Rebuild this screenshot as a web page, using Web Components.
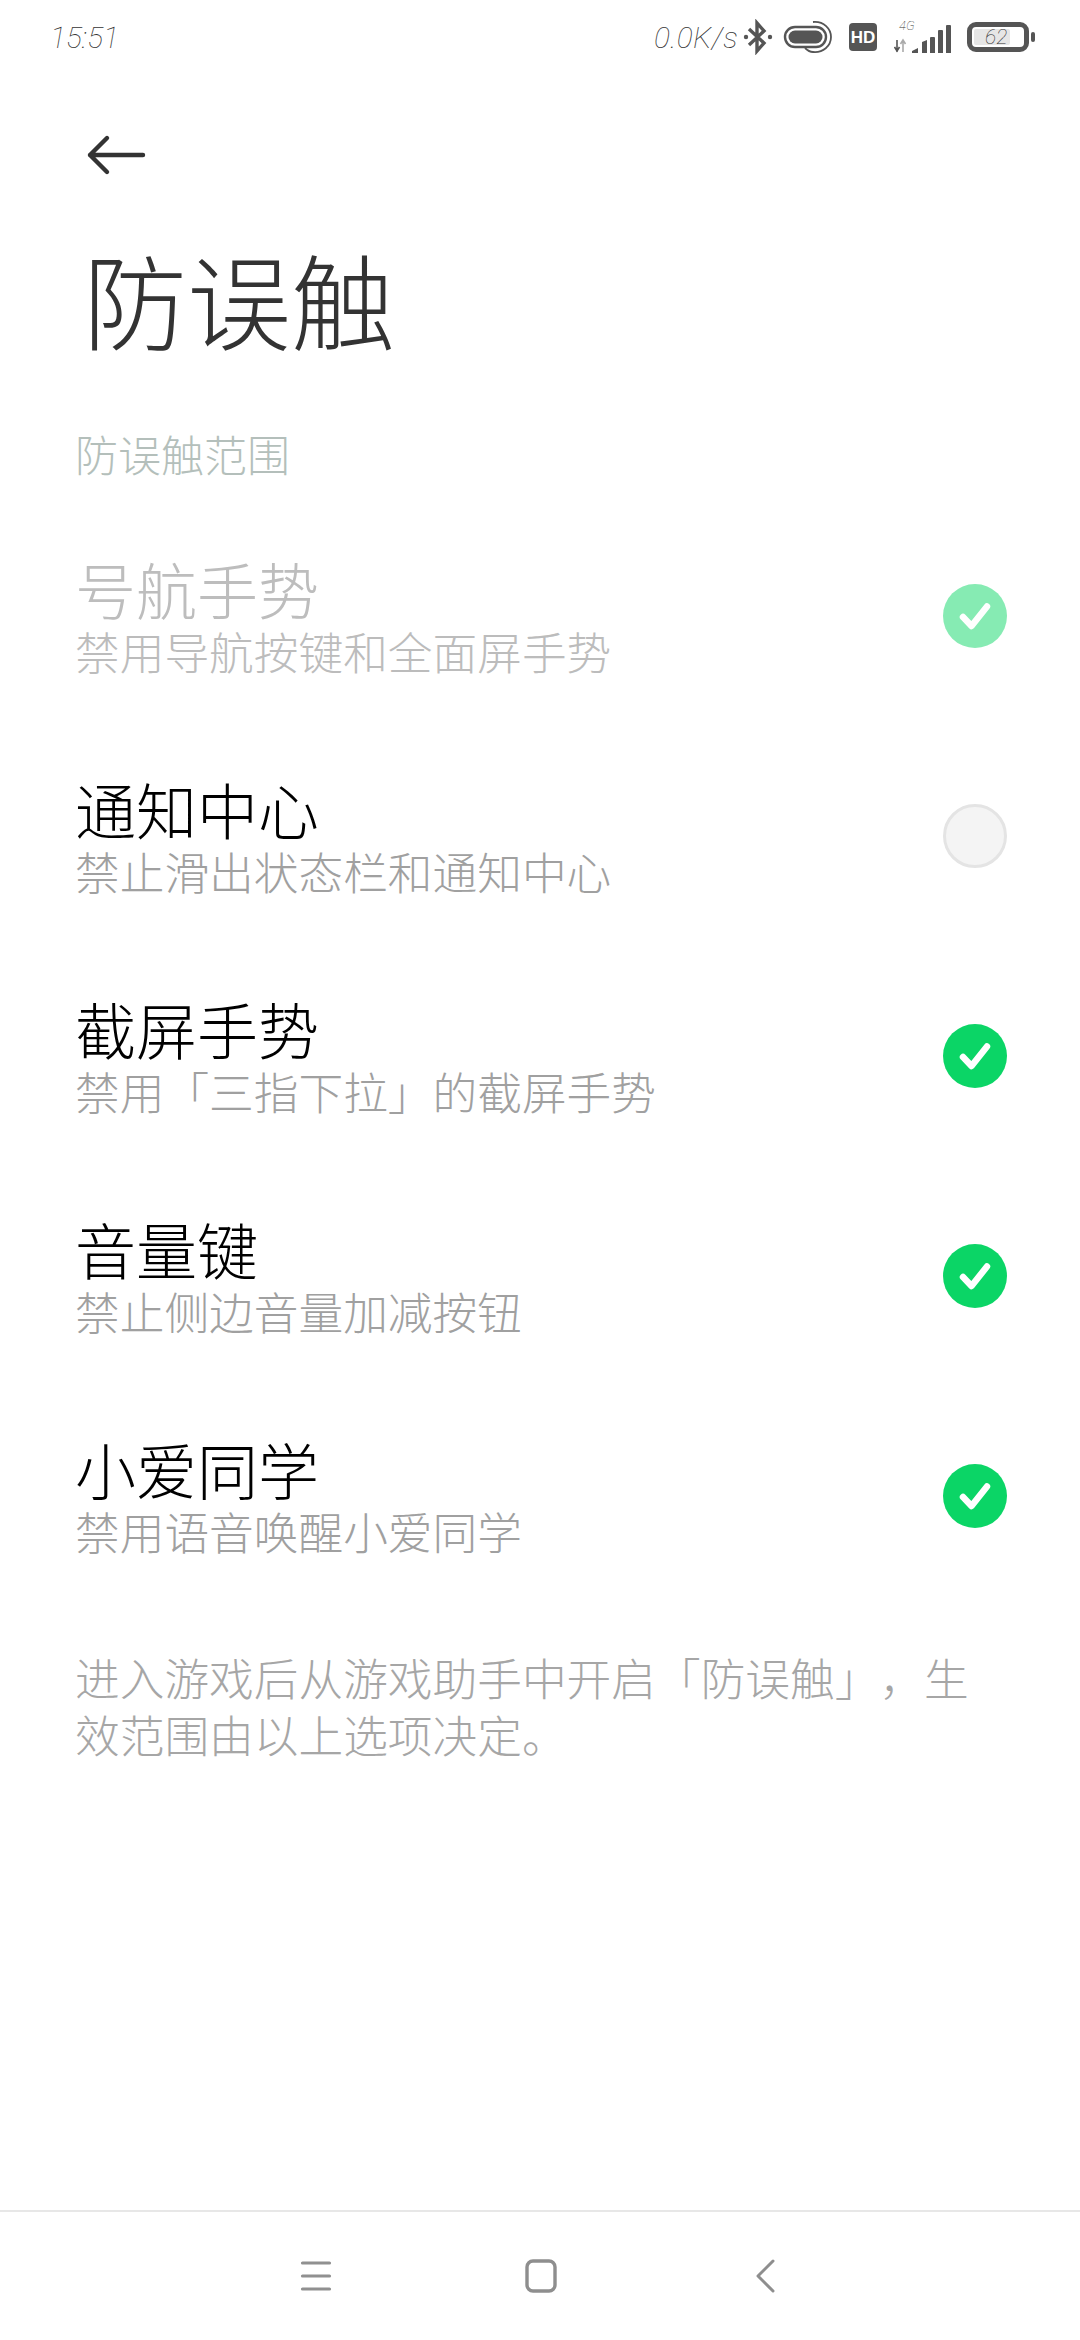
<!DOCTYPE html>
<html lang="zh-CN"><head><meta charset="utf-8"><title>防误触</title>
<style>
html,body{margin:0;padding:0;background:#fff}
body{width:1080px;height:2340px;font-family:"Liberation Sans","Noto Sans CJK SC",sans-serif;text-spacing-trim:space-all;display:flex;flex-direction:column;overflow:hidden}
</style></head><body>
<status-bar time="15:51" speed="0.0K/s" level="62"></status-bar>
<page-header>防误触</page-header>
<section-label>防误触范围</section-label>
<check-row checked disabled label="号航手势" sub="禁用导航按键和全面屏手势"></check-row>
<check-row label="通知中心" sub="禁止滑出状态栏和通知中心"></check-row>
<check-row checked label="截屏手势" sub="禁用「三指下拉」的截屏手势"></check-row>
<check-row checked label="音量键" sub="禁止侧边音量加减按钮"></check-row>
<check-row checked label="小爱同学" sub="禁用语音唤醒小爱同学"></check-row>
<foot-note>进入游戏后从游戏助手中开启「防误触」，生效范围由以上选项决定。</foot-note>
<nav-bar></nav-bar>
<script>
function el(name, html){
  customElements.define(name, class extends HTMLElement{
    connectedCallback(){
      if(this.shadowRoot) return;
      const a=n=>this.getAttribute(n)||'';
      this.attachShadow({mode:'open'}).innerHTML=html(a,this);
    }
  });
}
el('status-bar',a=>`<style>
:host{display:flex;align-items:center;height:76px;flex:none;padding:0 45px 2px 50px;box-sizing:border-box;color:#555;font-family:Roboto,"Liberation Sans",sans-serif}
.t{font-size:30px;font-weight:100;font-style:italic;color:#333}
.s{font-size:30px;font-weight:100;font-style:italic;color:#333;margin-left:auto;letter-spacing:.3px}
svg{display:block;flex:none}
.batt{position:relative;width:62px;height:30px;margin-left:15px;box-sizing:border-box;border:5px solid #555;border-radius:9px;flex:none}
.fill{position:absolute;left:2px;top:2px;bottom:2px;width:36px;background:#e6e6e6;border-radius:2px}
.n{position:absolute;left:13px;top:-3px;line-height:26px;font-size:21px;font-weight:100;font-style:italic;color:#333}
.nub{width:4px;height:10px;background:#555;border-radius:2px;margin-left:2px;flex:none}
</style>
<span class="t">${a('time')}</span><span class="s">${a('speed')}</span>
<svg width="30" height="36" viewBox="0 0 30 36" style="margin-left:5px"><path d="M6 10 L21 24 L14 32 V4 L21 12 L6 26" fill="none" stroke="#555" stroke-width="3.4"/><circle cx="3" cy="18" r="2.2" fill="#555"/><circle cx="27" cy="18" r="2.2" fill="#555"/></svg>
<svg width="50" height="34" viewBox="0 0 50 34" style="margin-left:9px"><rect x="3" y="7" width="41" height="20" rx="10" fill="none" stroke="#555" stroke-width="2.4"/><rect x="6.5" y="10.5" width="34" height="13" rx="6.5" fill="#555"/><path d="M31 2 C42 1 49 9 49 17 C49 26 41 33 31 32 C28 32 25 30 23 28" fill="none" stroke="#555" stroke-width="1.8"/></svg>
<svg width="28" height="28" viewBox="0 0 28 28" style="margin-left:17px"><rect width="28" height="28" rx="4" fill="#555"/><text x="14" y="20" text-anchor="middle" font-family="Liberation Sans" font-weight="700" font-size="17" fill="#fff">HD</text></svg>
<svg width="58" height="46" viewBox="0 -6 58 46" style="margin-left:17px"><text x="5" y="9.5" font-family="Roboto" font-weight="100" font-style="italic" font-size="13" fill="#333">4G</text><path d="M3 20v12M.5 27l2.5 4 2.5-4" fill="none" stroke="#555" stroke-width="1.6"/><path d="M9 32V20M6.500 24l2.500-4 2.500 4" fill="none" stroke="#aaa" stroke-width="1.600"/><path d="M18 33v-2l6-3v5zM28 33V22l5-2v13zM36 33V18q0-1 1-1h3q1 0 1 1v15zM44 33V11q0-1 1-1h3q1 0 1 1v22zM52 33V6q0-1 1-1h3q1 0 1 1v27z" fill="#555"/></svg>
<div class="batt"><div class="fill"></div><span class="n">62</span></div><div class="nub"></div>`);
el('page-header',()=>`<style>
:host{display:block;flex:none;color:#333}
.back{height:158px;padding:0 0 0 86px;display:flex;align-items:center}
svg{display:block}
.h{height:140px;line-height:146px;font-size:104px;padding-left:83px;font-weight:300}
</style>
<div class="back"><svg width="62" height="44" viewBox="0 0 62 44"><path d="M21 5 L4 22 L21 39 M4 22 H57" fill="none" stroke="#333" stroke-width="4.4" stroke-linecap="round" stroke-linejoin="round"/></svg></div>
<div class="h"><slot></slot></div>`);
el('section-label',()=>`<style>
:host{display:block;flex:none;margin-top:50px;margin-bottom:22px;height:60px;line-height:66px;padding-left:75px;font-size:43px;font-weight:300;color:#b4bfbb}
</style><slot></slot>`);
el('check-mark',(a,h)=>{
  const on=h.hasAttribute('checked'),dis=h.hasAttribute('disabled');
  return `<style>:host{display:block;flex:none;width:64px;height:64px}svg{display:block}</style>
<svg width="64" height="64" viewBox="0 0 64 64">${on?`<circle cx="32" cy="32" r="32" fill="${dis?'#86ebb3':'#0bd566'}"/><path d="M20 33 L28.500 42 L44 22.500" fill="none" stroke="#fff" stroke-width="6.500" stroke-linecap="round" stroke-linejoin="round"/>`:`<circle cx="32" cy="32" r="30.500" fill="#f4f4f4" stroke="#e4e4e4" stroke-width="3"/>`}</svg>`;
});
el('check-row',(a,h)=>{
  const on=h.hasAttribute('checked'),dis=h.hasAttribute('disabled');
  return `<style>
:host{display:flex;align-items:center;flex:none;height:220px;padding:0 73px 0 75px;box-sizing:border-box}
.b{flex:1;min-width:0;margin-top:12px}
.l{font-size:61px;line-height:70px;height:66px;font-weight:300;color:${dis?'#bdbdbd':'#000'}}
.d{font-size:44.700px;line-height:60px;font-weight:300;color:${dis?'#bcbcbc':'#a0a0a0'};white-space:nowrap}
</style>
<div class="b"><div class="l">${a('label')}</div><div class="d">${a('sub')}</div></div>
<check-mark ${on?'checked':''} ${dis?'disabled':''}></check-mark>`;
});
el('foot-note',()=>`<style>
:host{display:block;flex:none;margin-top:46px;padding:0 100px 0 75px;font-size:44.700px;line-height:57px;font-weight:300;color:#a6a6a6}
</style><slot></slot>`);
el('nav-bar',()=>`<style>
:host{display:grid;grid-template-columns:repeat(3,1fr);margin-top:auto;height:130px;flex:none;box-sizing:border-box;border-top:2px solid #e7e7e7;padding:0 202px 0 203px}
div{display:flex;align-items:center;justify-content:center}
svg{display:block}
</style>
<div><svg width="32" height="32" viewBox="0 0 32 32"><path d="M2.500 3H29.500M2.500 16H29.500M2.500 29H29.500" stroke="#909090" stroke-width="3.200" stroke-linecap="round"/></svg></div>
<div><svg width="32" height="36" viewBox="0 0 32 36"><rect x="2" y="3" width="28" height="30" rx="6" fill="none" stroke="#8e8e8e" stroke-width="3.400"/></svg></div>
<div><svg width="22" height="36" viewBox="0 0 22 36"><path d="M18 3 L3 18 L18 33" fill="none" stroke="#8e8e8e" stroke-width="3" stroke-linecap="round" stroke-linejoin="round"/></svg></div>`);
</script>
</body></html>
